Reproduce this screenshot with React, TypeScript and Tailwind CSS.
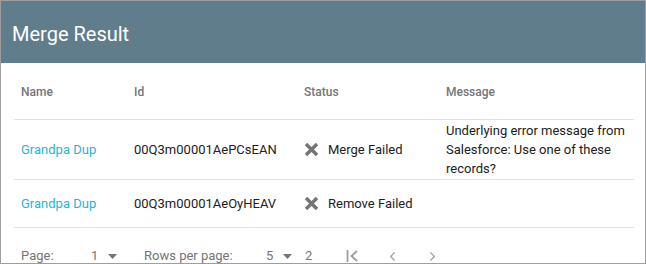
import { ChevronLeft, ChevronRight } from 'lucide-react';

const rows = [
  { name: 'Grandpa Dup', id: '00Q3m00001AePCsEAN', status: 'Merge Failed', message: 'Underlying error message from Salesforce: Use one of these records?' },
  { name: 'Grandpa Dup', id: '00Q3m00001AeOyHEAV', status: 'Remove Failed', message: '' },
];

function XIcon() {
  return (
    <svg width="15" height="15" viewBox="0 0 15 15" className="shrink-0">
      <path d="M2 2 L13 13 M13 2 L2 13" stroke="#757575" strokeWidth="3.4" strokeLinecap="butt" />
    </svg>
  );
}

function Caret() {
  return (
    <svg width="9" height="5" viewBox="0 0 9 5">
      <path d="M0 0 H9 L4.5 5 Z" fill="#757575" />
    </svg>
  );
}

function FirstPage() {
  return (
    <svg width="13" height="14" viewBox="0 0 13 14">
      <path d="M1.5 1 V13" stroke="#9e9e9e" strokeWidth="1.8" />
      <path d="M11 2 L5.5 7 L11 12" stroke="#9e9e9e" strokeWidth="1.8" fill="none" />
    </svg>
  );
}

export default function App() {
  return (
    <div className="w-[646px] h-[264px] overflow-hidden border border-[#9e9e9e] bg-white font-['Roboto',sans-serif]">
      {/* HEADER */}
      <header className="h-[62px] bg-[#607d8b] flex items-center pl-[11px] pt-[3px]">
        <h1 className="text-[20px] text-white font-normal">Merge Result</h1>
      </header>

      {/* TABLE */}
      <div className="pl-[13px] pr-[11px]">
        <div className="flex h-[57px] items-center pt-[2px] border-b border-[#e0e0e0] text-[12px] font-medium text-[#757575]">
          <div className="w-[113px] pl-[7px]">Name</div>
          <div className="w-[170px] pl-[7px]">Id</div>
          <div className="w-[142px] pl-[7px]">Status</div>
          <div className="flex-1 pl-[7px]">Message</div>
        </div>

        {rows.map((r, i) => (
          <div key={i} className={`flex items-center border-b border-[#e0e0e0] text-[13px] text-[#212121] ${i === 0 ? 'h-[60px]' : 'h-[48px]'}`}>
            <div className="w-[113px] pl-[7px] text-[#26b5d3]">{r.name}</div>
            <div className="w-[170px] pl-[7px]">{r.id}</div>
            <div className="w-[142px] pl-[7px] flex items-center gap-[9px]">
              <XIcon />
              <span>{r.status}</span>
            </div>
            <div className="flex-1 pl-[7px] pr-[6px] leading-[19px]">{r.message}</div>
          </div>
        ))}

        {/* PAGINATION */}
        <div className="flex items-center h-[56px] text-[13px] text-[#757575]">
          <span className="pl-[7px] w-[77px]">Page:</span>
          <span className="w-[17px]">1</span>
          <Caret />
          <span className="ml-[27px] w-[122px]">Rows per page:</span>
          <span className="w-[17px]">5</span>
          <Caret />
          <span className="ml-[13px]">2</span>
          <span className="ml-[34px]"><FirstPage /></span>
          <ChevronLeft className="ml-[26px] w-[15px] h-[15px] text-[#9e9e9e]" strokeWidth={1.8} />
          <ChevronRight className="ml-[25px] w-[15px] h-[15px] text-[#9e9e9e]" strokeWidth={1.8} />
        </div>
      </div>
    </div>
  );
}
